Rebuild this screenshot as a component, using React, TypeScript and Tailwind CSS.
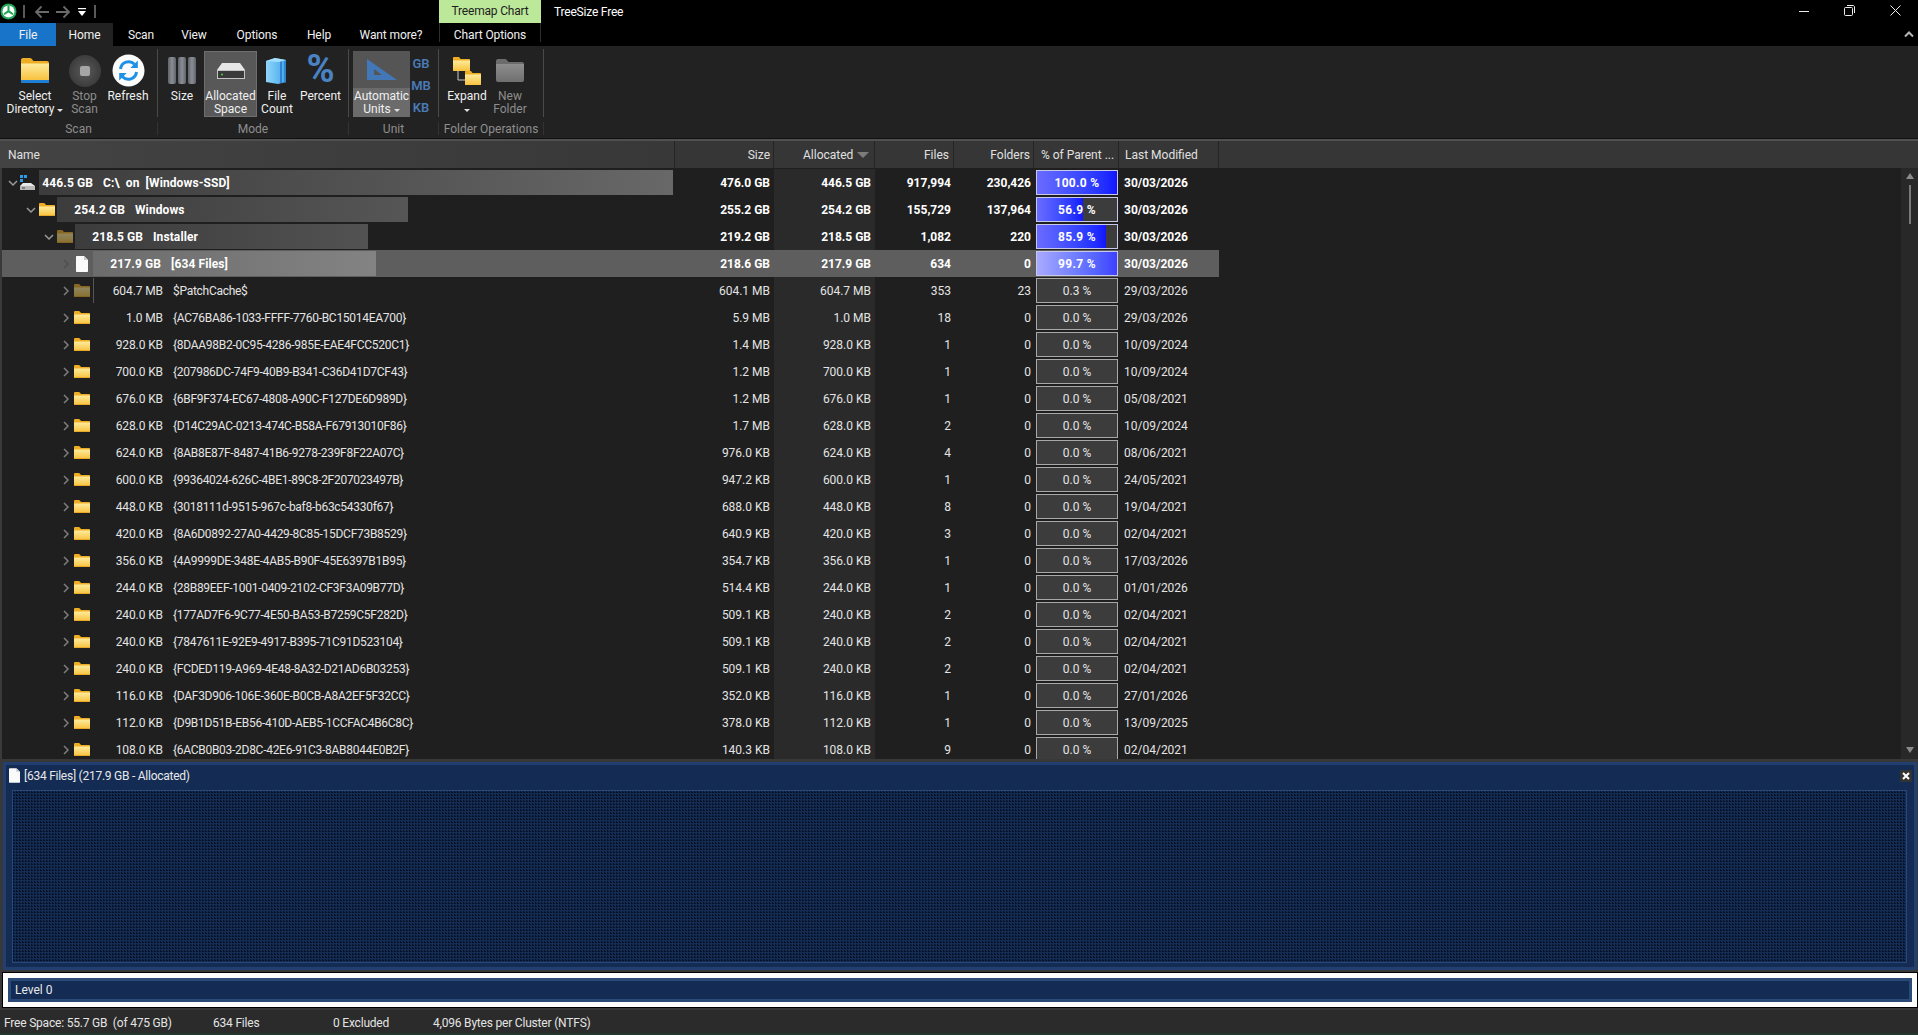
import React from "react";

type Row = {
  bar?: number; start: number; sizeW: number; chev: string; icon: "drive" | "folder" | "dim" | "file";
  label: string; name: string; size: string; alloc: string; files: string; folders: string;
  pct: string; fill: number; date: string; bold?: boolean; selected?: boolean; barClass?: string; expanded?: boolean;
};

const guid = (label: string, name: string, size: string, files: string, date: string, folders = "0"): Row => ({
  start: 91, sizeW: 70, chev: "pl-[59px]", icon: "folder", label, name, size, alloc: label, files, folders, pct: "0.0 %", fill: 0, date,
});

const rows: Row[] = [
  { bar: 634, start: 37, sizeW: 54, chev: "pl-[6px]", icon: "drive", label: "446.5 GB", name: "C:\\  on  [Windows-SSD]", size: "476.0 GB", alloc: "446.5 GB", files: "917,994", folders: "230,426", pct: "100.0 %", fill: 100, date: "30/03/2026", bold: true, expanded: true, barClass: "bg-gradient-to-r from-[#3c3c3c] to-[#686868]" },
  { bar: 351, start: 55, sizeW: 68, chev: "pl-[24px]", icon: "folder", label: "254.2 GB", name: "Windows", size: "255.2 GB", alloc: "254.2 GB", files: "155,729", folders: "137,964", pct: "56.9 %", fill: 56.9, date: "30/03/2026", bold: true, expanded: true, barClass: "bg-gradient-to-r from-[#3c3c3c] to-[#565656]" },
  { bar: 293, start: 73, sizeW: 68, chev: "pl-[42px]", icon: "dim", label: "218.5 GB", name: "Installer", size: "219.2 GB", alloc: "218.5 GB", files: "1,082", folders: "220", pct: "85.9 %", fill: 85.9, date: "30/03/2026", bold: true, expanded: true, barClass: "bg-gradient-to-r from-[#3c3c3c] to-[#525252]" },
  { bar: 283, start: 91, sizeW: 68, chev: "pl-[59px]", icon: "file", label: "217.9 GB", name: "[634 Files]", size: "218.6 GB", alloc: "217.9 GB", files: "634", folders: "0", pct: "99.7 %", fill: 99.7, date: "30/03/2026", bold: true, selected: true, barClass: "bg-gradient-to-r from-[#6c6c6c] to-[#838383]" },
  { bar: 1, start: 91, sizeW: 70, chev: "pl-[59px]", icon: "dim", label: "604.7 MB", name: "$PatchCache$", size: "604.1 MB", alloc: "604.7 MB", files: "353", folders: "23", pct: "0.3 %", fill: 0, date: "29/03/2026", barClass: "bg-[#555555]" },
  guid("1.0 MB", "{AC76BA86-1033-FFFF-7760-BC15014EA700}", "5.9 MB", "18", "29/03/2026"),
  guid("928.0 KB", "{8DAA98B2-0C95-4286-985E-EAE4FCC520C1}", "1.4 MB", "1", "10/09/2024"),
  guid("700.0 KB", "{207986DC-74F9-40B9-B341-C36D41D7CF43}", "1.2 MB", "1", "10/09/2024"),
  guid("676.0 KB", "{6BF9F374-EC67-4808-A90C-F127DE6D989D}", "1.2 MB", "1", "05/08/2021"),
  guid("628.0 KB", "{D14C29AC-0213-474C-B58A-F67913010F86}", "1.7 MB", "2", "10/09/2024"),
  guid("624.0 KB", "{8AB8E87F-8487-41B6-9278-239F8F22A07C}", "976.0 KB", "4", "08/06/2021"),
  guid("600.0 KB", "{99364024-626C-4BE1-89C8-2F207023497B}", "947.2 KB", "1", "24/05/2021"),
  guid("448.0 KB", "{3018111d-9515-967c-baf8-b63c54330f67}", "688.0 KB", "8", "19/04/2021"),
  guid("420.0 KB", "{8A6D0892-27A0-4429-8C85-15DCF73B8529}", "640.9 KB", "3", "02/04/2021"),
  guid("356.0 KB", "{4A9999DE-348E-4AB5-B90F-45E6397B1B95}", "354.7 KB", "1", "17/03/2026"),
  guid("244.0 KB", "{28B89EEF-1001-0409-2102-CF3F3A09B77D}", "514.4 KB", "1", "01/01/2026"),
  guid("240.0 KB", "{177AD7F6-9C77-4E50-BA53-B7259C5F282D}", "509.1 KB", "2", "02/04/2021"),
  guid("240.0 KB", "{7847611E-92E9-4917-B395-71C91D523104}", "509.1 KB", "2", "02/04/2021"),
  guid("240.0 KB", "{FCDED119-A969-4E48-8A32-D21AD6B03253}", "509.1 KB", "2", "02/04/2021"),
  guid("116.0 KB", "{DAF3D906-106E-360E-B0CB-A8A2EF5F32CC}", "352.0 KB", "1", "27/01/2026"),
  guid("112.0 KB", "{D9B1D51B-EB56-410D-AEB5-1CCFAC4B6C8C}", "378.0 KB", "1", "13/09/2025"),
  guid("108.0 KB", "{6ACB0B03-2D8C-42E6-91C3-8AB8044E0B2F}", "140.3 KB", "9", "02/04/2021"),
];

function Defs() {
  return (
    <svg width="0" height="0" className="absolute">
      <defs>
        <linearGradient id="fold" x1="0" y1="0" x2="0" y2="1"><stop offset="0" stopColor="#fdeb9c" /><stop offset="1" stopColor="#f8c23e" /></linearGradient>
        <linearGradient id="bar" x1="0" y1="0" x2="1" y2="0"><stop offset="0" stopColor="#5f636a" /><stop offset="0.5" stopColor="#8b8e95" /><stop offset="1" stopColor="#5f636a" /></linearGradient>
        <linearGradient id="gfold" x1="0" y1="0" x2="0" y2="1"><stop offset="0" stopColor="#8e8e8e" /><stop offset="1" stopColor="#6f6f6f" /></linearGradient>
        <linearGradient id="blue" x1="0" y1="0" x2="1" y2="0"><stop offset="0" stopColor="#8fd6fa" /><stop offset="1" stopColor="#45a6ea" /></linearGradient>
        <radialGradient id="stop"><stop offset="0" stopColor="#5a5a5a" /><stop offset="1" stopColor="#3c3c3c" /></radialGradient>
      </defs>
    </svg>
  );
}

function Folder({ w = 16, h = 13, dim = false }: { w?: number; h?: number; dim?: boolean }) {
  return (
    <svg width={w} height={h} viewBox="0 0 16 13" className={dim ? "opacity-50 shrink-0" : "shrink-0"}>
      <path d="M0 1.2C0 .5.5 0 1.2 0h3.6c.4 0 .7.2 1 .5L7 2h8c.6 0 1 .4 1 1v1H0z" fill="#efad24" />
      <path d="M0 3.6h16V12c0 .6-.4 1-1 1H1c-.6 0-1-.4-1-1z" fill="url(#fold)" />
      <rect x="0" y="12" width="16" height="1" rx=".5" fill="#e9a825" />
    </svg>
  );
}

function DriveSmall() {
  return (
    <svg width="15" height="16" viewBox="0 0 15 16" className="shrink-0">
      <rect x="0" y="0" width="3" height="3" fill="#2f9be8" />
      <rect x="4" y="0" width="3" height="3" fill="#2f9be8" />
      <rect x="0" y="4" width="3" height="3" fill="#2f9be8" />
      <path d="M3 8h8l4 3H0z" fill="#e8e8e8" />
      <rect x="0" y="11" width="15" height="4" fill="#b9b9b9" />
      <rect x="2" y="12.5" width="3" height="1" fill="#444" />
    </svg>
  );
}

function FileIcon({ big = false }: { big?: boolean }) {
  return (
    <svg width={big ? 11 : 12} height={big ? 15 : 16} viewBox="0 0 12 16" className="shrink-0">
      <path d="M1 0h7l4 4v11c0 .6-.4 1-1 1H1c-.6 0-1-.4-1-1V1c0-.6.4-1 1-1z" fill="#fafafa" />
      <path d="M8 0v4h4z" fill="#c9c9c9" />
    </svg>
  );
}

function Chevron({ open, dim }: { open?: boolean; dim?: boolean }) {
  return (
    <svg width="10" height="10" viewBox="0 0 10 10" className="shrink-0">
      <path d={open ? "M1 3l4 4 4-4" : "M3 1l4 4-4 4"} fill="none" stroke={dim ? "#4f4f4f" : open ? "#9a9a9a" : "#7d7d7d"} strokeWidth="1.5" />
    </svg>
  );
}

function Pct({ r }: { r: Row }) {
  return (
    <div className={`relative ml-[2px] flex h-[25px] w-[82px] items-center justify-center overflow-hidden border ${r.bold ? "border-[#c8c8e8]" : "border-[#a8a8a8]"} bg-[#3c3c3c]`}>
      {r.fill > 0 && (
        <div
          className={`absolute inset-y-0 left-0 ${r.selected ? "bg-gradient-to-r from-[#a9a9ff] to-[#3f3fff]" : "bg-gradient-to-r from-[#6a6aff] to-[#1414ff]"}`}
          style={{ width: `${r.fill}%` }}
        />
      )}
      <span className={`relative whitespace-nowrap ${r.bold ? "tracking-[0.3px]" : ""}`}>{r.pct}</span>
    </div>
  );
}

function TreeRow({ r }: { r: Row }) {
  return (
    <div className={`flex h-[27px] shrink-0 items-center ${r.bold ? "font-bold text-white" : "text-[#e4e4e4]"}`}>
      <div className={`flex h-full w-[673px] shrink-0 items-center ${r.selected ? "bg-[#5e5e5e]" : ""}`}>
        <div className="flex h-full items-center" style={{ width: r.start }}>
          <div className={`flex items-center ${r.chev}`}>
            <Chevron open={r.expanded} dim={r.selected} />
            {r.icon === "drive" && <span className="ml-[2px]"><DriveSmall /></span>}
            {r.icon === "folder" && <span className="ml-[3px]"><Folder /></span>}
            {r.icon === "dim" && <span className="ml-[3px]"><Folder dim /></span>}
            {r.icon === "file" && <span className="ml-[5px]"><FileIcon /></span>}
          </div>
        </div>
        <div className="relative flex h-full flex-1 items-center">
          {r.bar && <div className={`absolute inset-y-px left-0 ${r.barClass}`} style={{ width: r.bar }} />}
          <span className={`relative text-right ${r.bold ? "tracking-[0.1px]" : "tracking-[-0.1px]"}`} style={{ width: r.sizeW }}>{r.label}</span>
          <span className={`relative ml-[10px] whitespace-pre ${r.bold ? "tracking-[0.1px]" : "tracking-[-0.28px]"}`}>{r.name}</span>
        </div>
      </div>
      <div className={`flex h-full w-[99px] shrink-0 items-center justify-end pr-[4px] ${r.selected ? "bg-[#5e5e5e]" : ""}`}>{r.size}</div>
      <div className={`flex h-full w-[101px] shrink-0 items-center justify-end pr-[4px] ${r.selected ? "bg-[#5e5e5e]" : "bg-[#2a2a2a]"}`}>{r.alloc}</div>
      <div className={`flex h-full w-[79px] shrink-0 items-center justify-end pr-[3px] ${r.selected ? "bg-[#5e5e5e]" : ""}`}>{r.files}</div>
      <div className={`flex h-full w-[80px] shrink-0 items-center justify-end pr-[3px] ${r.selected ? "bg-[#5e5e5e]" : ""}`}>{r.folders}</div>
      <div className={`flex h-full w-[85px] shrink-0 items-center ${r.selected ? "bg-[#5e5e5e]" : ""}`}><Pct r={r} /></div>
      <div className={`flex h-full w-[100px] shrink-0 items-center pl-[5px] ${r.selected ? "bg-[#5e5e5e]" : ""}`}>{r.date}</div>
    </div>
  );
}

function RibbonButton({ className, icon, lines, caret, dim }: { className: string; icon: React.ReactNode; lines: string[]; caret?: boolean; dim?: boolean }) {
  return (
    <div className={`flex h-[66px] shrink-0 flex-col items-center ${className}`}>
      <div className="flex h-[39px] w-full items-center justify-center">{icon}</div>
      <div className={`flex flex-col items-center leading-[13px] ${dim ? "text-[#8d8d8d]" : "text-[#f0f0f0]"}`}>
        {lines.map((l, i) => (
          <span key={l} className="flex items-center whitespace-nowrap">
            {l}
            {caret && i === lines.length - 1 && <span className="ml-[3px] mt-[1px] h-0 w-0 border-x-[3px] border-t-[3px] border-x-transparent border-t-[#e0e0e0]" />}
          </span>
        ))}
      </div>
    </div>
  );
}

function Separator() {
  return (
    <div className="flex w-px shrink-0 flex-col">
      <div className="mt-[3px] h-[68px] bg-[#4a4a4a]" />
      <div className="mt-[5px] h-[13px] bg-[#333333]" />
    </div>
  );
}

function Group({ className, label, children }: { className: string; label: string; children: React.ReactNode }) {
  return (
    <div className={`flex shrink-0 flex-col pt-[5px] ${className}`}>
      <div className="flex h-[66px]">{children}</div>
      <div className="pt-[6px] text-center leading-[13px] text-[#8e8e8e]">{label}</div>
    </div>
  );
}

function RefreshIcon() {
  return (
    <svg width="33" height="33" viewBox="0 0 33 33">
      <circle cx="16.5" cy="16.5" r="16" fill="#fbfbfb" />
      <path d="M8.5 15a8.2 8.2 0 0 1 14-4.8" fill="none" stroke="#1e90e6" strokeWidth="3" />
      <path d="M25.8 6.5v7.5h-7.5z" fill="#1e90e6" />
      <path d="M24.5 18a8.2 8.2 0 0 1-14 4.8" fill="none" stroke="#1e90e6" strokeWidth="3" />
      <path d="M7.2 26.5V19h7.5z" fill="#1e90e6" />
    </svg>
  );
}

function Ribbon() {
  return (
    <div className="flex h-[92px] shrink-0 bg-[#222222]">
      <Group className="w-[157px]" label="Scan">
        <RibbonButton
          className="ml-[2px] w-[66px]"
          caret
          lines={["Select", "Directory"]}
          icon={
            <svg width="28" height="25" viewBox="0 0 28 25">
              <path d="M0 2c0-1 .8-2 2-2h7c.7 0 1.2.3 1.6.8L12.5 3H26c1.2 0 2 .8 2 2v2H0z" fill="#efad24" />
              <path d="M0 5.5h28V22H0z" fill="url(#fold)" />
              <rect x="0" y="22" width="28" height="3" fill="#1d7fd6" />
            </svg>
          }
        />
        <RibbonButton
          className="w-[33px]"
          dim
          lines={["Stop", "Scan"]}
          icon={
            <svg width="32" height="32" viewBox="0 0 32 32">
              <circle cx="16" cy="16" r="16" fill="url(#stop)" />
              <rect x="11" y="11" width="10" height="10" rx="2" fill="#a6a6a6" />
            </svg>
          }
        />
        <RibbonButton className="ml-[6px] w-[42px]" lines={["Refresh"]} icon={<RefreshIcon />} />
      </Group>
      <Separator />
      <Group className="w-[190px]" label="Mode">
        <RibbonButton
          className="ml-[10px] w-[28px]"
          lines={["Size"]}
          icon={
            <svg width="28" height="27" viewBox="0 0 28 27">
              <rect x="0" y="0" width="8" height="27" rx="2" fill="url(#bar)" />
              <rect x="10" y="0" width="8" height="27" rx="2" fill="url(#bar)" />
              <rect x="20" y="0" width="8" height="27" rx="2" fill="url(#bar)" />
            </svg>
          }
        />
        <RibbonButton
          className="ml-[8px] w-[53px] bg-[#585858] outline outline-1 -outline-offset-1 outline-[#6e6e6e]"
          lines={["Allocated", "Space"]}
          icon={
            <svg width="28" height="16" viewBox="0 0 28 16">
              <path d="M5 0h18l5 7H0z" fill="#e6e6e6" />
              <rect x="0" y="7" width="28" height="9" fill="#c4c4c4" />
              <rect x="1" y="8" width="26" height="7" fill="#3a3a3a" />
              <circle cx="5" cy="11.5" r="1" fill="#43d64a" />
            </svg>
          }
        />
        <RibbonButton
          className="w-[40px]"
          lines={["File", "Count"]}
          icon={
            <svg width="22" height="26" viewBox="0 0 22 26">
              <path d="M0 3l9-3 11 2v22l-8 2-12-2z" fill="url(#blue)" />
              <path d="M14 3h2v22h-2zM18 2.500h2v22h-2z" fill="#2f84d2" />
              <path d="M0 3l9-3 11 2-7 2z" fill="#a5e0fb" />
            </svg>
          }
        />
        <RibbonButton
          className="w-[47px]"
          lines={["Percent"]}
          icon={<span className="mb-[3px] block h-[30px] text-[38px] leading-[30px] font-bold text-[#4a82c4]">%</span>}
        />
      </Group>
      <Separator />
      <Group className="w-[89px]" label="Unit">
        <div className="ml-[4px] flex h-[66px] w-[57px] shrink-0 flex-col items-center bg-[#555555]">
          <div className="flex h-[37px] w-full items-center justify-center">
            <svg width="30" height="21" viewBox="0 0 30 21">
              <path fillRule="evenodd" d="M0 0l30 21H0zM7 10v6h8z" fill="#4378b8" />
            </svg>
          </div>
          <div className="flex w-full flex-1 flex-col items-center bg-[#6b6b6b] leading-[13px] text-[#f0f0f0]">
            <span className="mt-[2px]">Automatic</span>
            <span className="flex items-center">Units<span className="ml-[3px] mt-[1px] h-0 w-0 border-x-[3px] border-t-[3px] border-x-transparent border-t-[#e0e0e0]" /></span>
          </div>
        </div>
        <div className="ml-[1px] flex w-[20px] flex-col items-center pt-[2px] text-[13px] leading-[22px] font-semibold text-[#4a7ab8]">
          <span>GB</span><span>MB</span><span>KB</span>
        </div>
      </Group>
      <Separator />
      <Group className="w-[104px]" label="Folder Operations">
        <div className="ml-[8px] flex h-[66px] w-[40px] shrink-0 flex-col items-center">
          <div className="flex h-[39px] w-full items-center justify-center">
            <svg width="28" height="28" viewBox="0 0 28 28">
              <path d="M5 13v10h7" fill="none" stroke="#c8c8c8" strokeWidth="1" />
              <path d="M0 1c0-.6.4-1 1-1h5l1.500 2H16c.6 0 1 .4 1 1v10c0 .6-.4 1-1 1H1c-.6 0-1-.4-1-1z" fill="#efad24" />
              <path d="M0 3.500h17V13c0 .6-.4 1-1 1H1c-.6 0-1-.4-1-1z" fill="url(#fold)" />
              <path d="M12 15c0-.6.4-1 1-1h5l1.500 2H27c.6 0 1 .4 1 1v10c0 .6-.4 1-1 1H13c-.6 0-1-.4-1-1z" fill="#efad24" />
              <path d="M12 17.500h16V27c0 .6-.4 1-1 1H13c-.6 0-1-.4-1-1z" fill="url(#fold)" />
            </svg>
          </div>
          <span className="leading-[13px] text-[#f0f0f0]">Expand</span>
          <span className="mt-[6px] h-0 w-0 border-x-[3px] border-t-[3px] border-x-transparent border-t-[#e0e0e0]" />
        </div>
        <RibbonButton
          className="ml-[3px] w-[40px]"
          dim
          lines={["New", "Folder"]}
          icon={
            <svg width="28" height="23" viewBox="0 0 28 23">
              <path d="M0 2c0-1 .8-2 2-2h7c.7 0 1.200.3 1.600.8L12.500 3H26c1.200 0 2 .8 2 2v2H0z" fill="#6c6c6c" />
              <path d="M0 5h28v16c0 1.200-.8 2-2 2H2c-1.200 0-2-.8-2-2z" fill="url(#gfold)" />
            </svg>
          }
        />
      </Group>
      <Separator />
    </div>
  );
}

function Header() {
  const cell = "flex h-full shrink-0 items-center border-r border-[#242424]";
  return (
    <div className="flex h-[27px] shrink-0 bg-[#363636] text-[#e0e0e0]">
      <div className={`${cell} w-[675px] bg-gradient-to-r from-[#434343] to-[#383838] pl-[8px]`}>Name</div>
      <div className={`${cell} w-[99px] justify-end pr-[3px]`}>Size</div>
      <div className={`${cell} w-[101px] pl-[29px]`}>
        Allocated
        <span className="ml-[4px] h-0 w-0 border-x-[6px] border-t-[6px] border-x-transparent border-t-[#7c7c7c]" />
      </div>
      <div className={`${cell} w-[79px] justify-end pr-[4px]`}>Files</div>
      <div className={`${cell} w-[80px] justify-end pr-[3px]`}>Folders</div>
      <div className={`${cell} w-[85px] pl-[7px]`}>% of Parent ...</div>
      <div className={`${cell} w-[100px] pl-[6px]`}>Last Modified</div>
    </div>
  );
}

function Scrollbar() {
  return (
    <div className="flex h-[591px] w-[17px] shrink-0 flex-col items-center bg-[#282828]">
      <span className="mt-[5px] h-0 w-0 border-x-[4px] border-b-[6px] border-x-transparent border-b-[#8a8a8a]" />
      <div className="mt-[6px] h-[39px] w-[2px] bg-[#7a7a7a]" />
      <span className="mb-[6px] mt-auto h-0 w-0 border-x-[4px] border-t-[6px] border-x-transparent border-t-[#8a8a8a]" />
    </div>
  );
}

function TitleBar() {
  return (
    <div className="flex h-[23px] shrink-0 items-start">
      <div className="flex h-[23px] w-[439px] shrink-0 items-center">
        <svg width="17" height="17" viewBox="0 0 17 17" className="shrink-0">
          <circle cx="8.500" cy="8.500" r="8" fill="#1fa659" />
          <circle cx="8.500" cy="8.500" r="6" fill="#ffffff" />
          <path d="M7.500 2.500h2v5l4 3-1 1.600-4-2.600-4 2.600-1-1.600 4-3z" fill="#1fa659" />
        </svg>
        <div className="ml-[6px] h-[13px] w-[2px] bg-[#5a5a5a]" />
        <svg width="16" height="14" viewBox="0 0 16 14" className="ml-[9px] shrink-0">
          <path d="M15 7H2M7.500 1.500 2 7l5.500 5.500" fill="none" stroke="#6a6a6a" strokeWidth="1.800" />
        </svg>
        <svg width="16" height="14" viewBox="0 0 16 14" className="ml-[5px] shrink-0">
          <path d="M1 7h13M8.500 1.500 14 7l-5.500 5.500" fill="none" stroke="#6a6a6a" strokeWidth="1.800" />
        </svg>
        <svg width="8" height="8" viewBox="0 0 8 8" className="ml-[7px] shrink-0">
          <rect x="0" y="0" width="8" height="1.200" fill="#ffffff" />
          <path d="M0 3h8L4 8z" fill="#ffffff" />
        </svg>
        <div className="ml-[8px] h-[13px] w-[2px] bg-[#5a5a5a]" />
      </div>
      <div className="flex h-[23px] w-[102px] shrink-0 items-center justify-center bg-[#bce89a] pb-[2px] tracking-[-0.2px] text-[#1e1e1e]">Treemap Chart</div>
      <div className="ml-[13px] flex h-[23px] items-center tracking-[-0.2px] text-white">TreeSize Free</div>
      <div className="ml-auto flex h-[23px]">
        <div className="flex h-[21px] w-[46px] items-center justify-center">
          <svg width="10" height="10" viewBox="0 0 10 10"><path d="M0 5.500h10" stroke="#ededed" /></svg>
        </div>
        <div className="flex h-[21px] w-[45px] items-center justify-center">
          <svg width="11" height="11" viewBox="0 0 11 11">
            <rect x=".5" y="2.500" width="8" height="8" rx="1" fill="none" stroke="#ededed" />
            <path d="M3 .5h6c.8 0 1.500.7 1.500 1.500v6" fill="none" stroke="#ededed" />
          </svg>
        </div>
        <div className="flex h-[21px] w-[46px] items-center justify-center">
          <svg width="11" height="11" viewBox="0 0 11 11"><path d="M.5.5l10 10M10.500.5l-10 10" stroke="#ededed" /></svg>
        </div>
      </div>
    </div>
  );
}

function TabBar() {
  const tab = "flex h-full shrink-0 items-center justify-center tracking-[-0.1px] text-[#f0f0f0]";
  return (
    <div className="flex h-[23px] shrink-0">
      <div className={`${tab} w-[56px] bg-[#1874c8]`}>File</div>
      <div className={`${tab} w-[57px] bg-[#222222]`}>Home</div>
      <div className={`${tab} w-[56px]`}>Scan</div>
      <div className={`${tab} w-[50px]`}>View</div>
      <div className={`${tab} w-[76px]`}>Options</div>
      <div className={`${tab} w-[48px]`}>Help</div>
      <div className={`${tab} w-[96px]`}>Want more?</div>
      <div className="relative flex h-full w-[102px] shrink-0 items-center justify-center tracking-[-0.1px] text-[#f0f0f0]">
        <span className="absolute inset-y-0 left-0 bottom-[4px] w-px bg-[#2e2e2e]" />
        Chart Options
        <span className="absolute inset-y-0 right-0 bottom-[4px] w-px bg-[#2e2e2e]" />
      </div>
      <div className="ml-auto flex h-full w-[18px] items-center justify-center">
        <svg width="10" height="7" viewBox="0 0 10 7"><path d="M1 5.500 5 1.500l4 4" fill="none" stroke="#b5b5b5" strokeWidth="2" /></svg>
      </div>
    </div>
  );
}

function Treemap() {
  return (
    <div className="ml-[3px] flex h-[208px] w-[1914px] shrink-0 flex-col border-[3px] border-[#21406f] bg-[#142c54]">
      <div className="flex h-[25px] shrink-0 items-center pb-[4px] pl-[3px] text-[#e8e8e8]">
        <FileIcon big />
        <span className="ml-[4px] tracking-[-0.25px]">[634 Files] (217.9 GB - Allocated)</span>
        <div className="ml-auto mr-[2px] flex h-[12px] w-[12px] items-center justify-center bg-[#333333]">
          <svg width="8" height="8" viewBox="0 0 8 8"><path d="M1 1l6 6M7 1 1 7" stroke="#ffffff" strokeWidth="2" /></svg>
        </div>
      </div>
      <div className="mb-[4px] ml-[6px] mr-[7px] flex-1 border border-[#28487a] bg-[conic-gradient(from_270deg_at_1.5px_1.5px,#081226_25%,#142c54_0)] bg-[length:3px_3px]" />
    </div>
  );
}

export default function App() {
  return (
    <div className="flex h-[1035px] w-[1918px] flex-col overflow-hidden bg-black font-['Roboto',sans-serif] text-[12px] leading-[14px]">
      <Defs />
      <TitleBar />
      <TabBar />
      <Ribbon />
      <div className="h-px shrink-0 bg-[#111111]" />
      <div className="h-[2px] shrink-0 bg-[#505050]" />
      <Header />
      <div className="flex h-[591px] shrink-0 bg-[#1f1f1f]">
        <div className="h-full w-[2px] shrink-0 bg-[#3a3a3a]" />
        <div className="flex min-w-0 flex-1 flex-col overflow-hidden pt-px">
          {rows.map((r, i) => <TreeRow key={i} r={r} />)}
        </div>
        <Scrollbar />
      </div>
      <div className="flex flex-1 flex-col bg-[#383838] pt-[3px]">
        <Treemap />
        <div className="ml-[3px] mt-[3px] h-[34px] w-[1914px] shrink-0 border-[5px] border-white bg-[#142c54] outline outline-1 outline-black">
          <div className="flex h-full items-center border-[3px] border-[#2a4a78] pl-[4px] text-[#e8e8e8]">Level 0</div>
        </div>
        <div className="mt-[3px] flex h-[23px] shrink-0 items-center bg-[#2b2b2b] pt-[2px] tracking-[-0.2px] text-[#e4e4e4]">
          <span className="w-[213px] whitespace-pre pl-[4px]">Free Space: 55.7 GB  (of 475 GB)</span>
          <span className="w-[120px]">634 Files</span>
          <span className="w-[100px]">0 Excluded</span>
          <span>4,096 Bytes per Cluster (NTFS)</span>
        </div>
        <div className="h-[2px] shrink-0 bg-[#24372f]" />
      </div>
    </div>
  );
}
